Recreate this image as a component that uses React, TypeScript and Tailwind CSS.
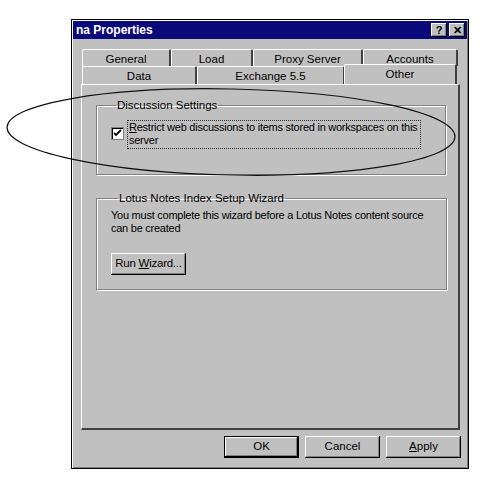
import React from "react";

const raised =
  "bg-[#c0c0c0] shadow-[inset_-1px_-1px_0_#000,inset_1px_1px_0_#fff,inset_-2px_-2px_0_#808080]";

const TitleButton = ({ children }: { children: React.ReactNode }) => (
  <div
    className={`${raised} w-[16px] h-[14px] flex items-center justify-center text-[11px] font-bold leading-none text-black`}
  >
    {children}
  </div>
);

const Tab = ({ label, w, active }: { label: string; w: number; active?: boolean }) => {
  if (active) {
    return (
      <div
        style={{ width: w }}
        className="relative z-10 -mt-[2px] -mx-[1px] h-[20px] -mb-[1px] bg-[#c0c0c0] border-t border-l border-white border-r-2 border-r-[#404040] rounded-t-[2px] flex justify-center pt-[1px] text-[11.5px]"
      >
        {label}
      </div>
    );
  }
  return (
    <div
      style={{ width: w }}
      className="h-full bg-[#c0c0c0] border-t border-l border-white border-r-2 border-r-[#404040] rounded-t-[2px] flex justify-center pt-[1px] text-[11.5px]"
    >
      {label}
    </div>
  );
};

const Button = ({
  children,
  w = 75,
  isDefault,
}: {
  children: React.ReactNode;
  w?: number;
  isDefault?: boolean;
}) => (
  <div
    style={{ width: w }}
    className={`h-[22px] flex items-center justify-center text-[11.5px] bg-[#c0c0c0] ${
      isDefault
        ? "border border-black shadow-[inset_-1px_-1px_0_#000,inset_1px_1px_0_#fff,inset_-2px_-2px_0_#808080]"
        : "shadow-[inset_-1px_-1px_0_#000,inset_1px_1px_0_#fff,inset_-2px_-2px_0_#808080]"
    }`}
  >
    <span>{children}</span>
  </div>
);

export default function App() {
  return (
    <div
      className="relative w-[500px] h-[479px] bg-white overflow-hidden text-black"
      style={{ fontFamily: '"Liberation Sans", Arial, sans-serif' }}
    >
      <div className="ml-[71px] mt-[19px] w-[398px] h-[450px] bg-[#c0c0c0] border border-black shadow-[inset_1px_1px_0_#fff,inset_-1px_-1px_0_#808080] flex flex-col">
        {/* title bar */}
        <div className="mx-[1px] mt-[1px] h-[18px] bg-[#0a0a7a] flex items-center justify-between pl-[3px] pr-[2px]">
          <span className="text-white font-bold text-[12px]">na Properties</span>
          <div className="flex gap-[2px]">
            <TitleButton>?</TitleButton>
            <TitleButton>✕</TitleButton>
          </div>
        </div>

        {/* tabs + panel */}
        <div className="pl-[9px] pr-[8px] pt-[10px]">
          <div className="flex h-[17px] pl-[1px]">
            <Tab label="General" w={89} />
            <Tab label="Load" w={82} />
            <Tab label="Proxy Server" w={110} />
            <Tab label="Accounts" w={95} />
          </div>
          <div className="flex h-[18px] pl-[1px]">
            <Tab label="Data" w={115} />
            <Tab label="Exchange 5.5" w={148} />
            <Tab label="Other" w={113} active />
          </div>
          <div className="h-[346px] border-t border-l border-white border-r-2 border-b-2 border-r-[#404040] border-b-[#404040] pt-[13px] pl-[14px] pr-[12px] text-[11px] tracking-[-0.25px]">
            <fieldset className="h-[77px] border border-[#808080] shadow-[inset_1px_1px_0_#fff,1px_1px_0_#fff] px-[14px]">
              <legend className="ml-[5px] px-[1px] leading-[14px] text-[11.5px] tracking-normal">Discussion Settings</legend>
              <div className="flex items-start gap-[3px] mt-[8px]">
                <div className="mt-[7px] w-[13px] h-[13px] bg-white border border-[#808080] shadow-[inset_1px_1px_0_#000] flex items-center justify-center shrink-0">
                  <svg width="9" height="9" viewBox="0 0 9 9">
                    <path d="M1 4 L3 6 L8 1" stroke="black" strokeWidth="1.8" fill="none" />
                  </svg>
                </div>
                <div className="border border-dotted border-[#303030] pl-[1px] w-[294px] leading-[13px] pb-[1px]">
                  <span className="underline">R</span>estrict web discussions to items stored in workspaces on this server
                </div>
              </div>
            </fieldset>

            <fieldset className="mt-[16px] h-[99px] border border-[#808080] shadow-[inset_1px_1px_0_#fff,1px_1px_0_#fff] pl-[14px] pr-[10px]">
              <legend className="ml-[7px] px-[1px] leading-[14px] text-[11.5px] tracking-normal">Lotus Notes Index Setup Wizard</legend>
              <div className="leading-[13px] mt-[4px] w-[325px]">
                You must complete this wizard before a Lotus Notes content source can be created
              </div>
              <div className="mt-[18px]">
                <Button w={75}>
                  Run <span className="underline">W</span>izard...
                </Button>
              </div>
            </fieldset>
          </div>
        </div>

        {/* buttons */}
        <div className="flex justify-end gap-[6px] mt-[6px] pr-[7px]">
          <Button isDefault>OK</Button>
          <Button>Cancel</Button>
          <Button>
            <span className="underline">A</span>pply
          </Button>
        </div>
      </div>

      {/* hand-drawn ellipse annotation */}
      <svg className="absolute left-0 top-0 pointer-events-none" width="500" height="479">
        <ellipse
          cx="231"
          cy="132"
          rx="224"
          ry="43"
          transform="rotate(1.2 231 132)"
          fill="none"
          stroke="#111"
          strokeWidth="1.2"
        />
      </svg>
    </div>
  );
}
